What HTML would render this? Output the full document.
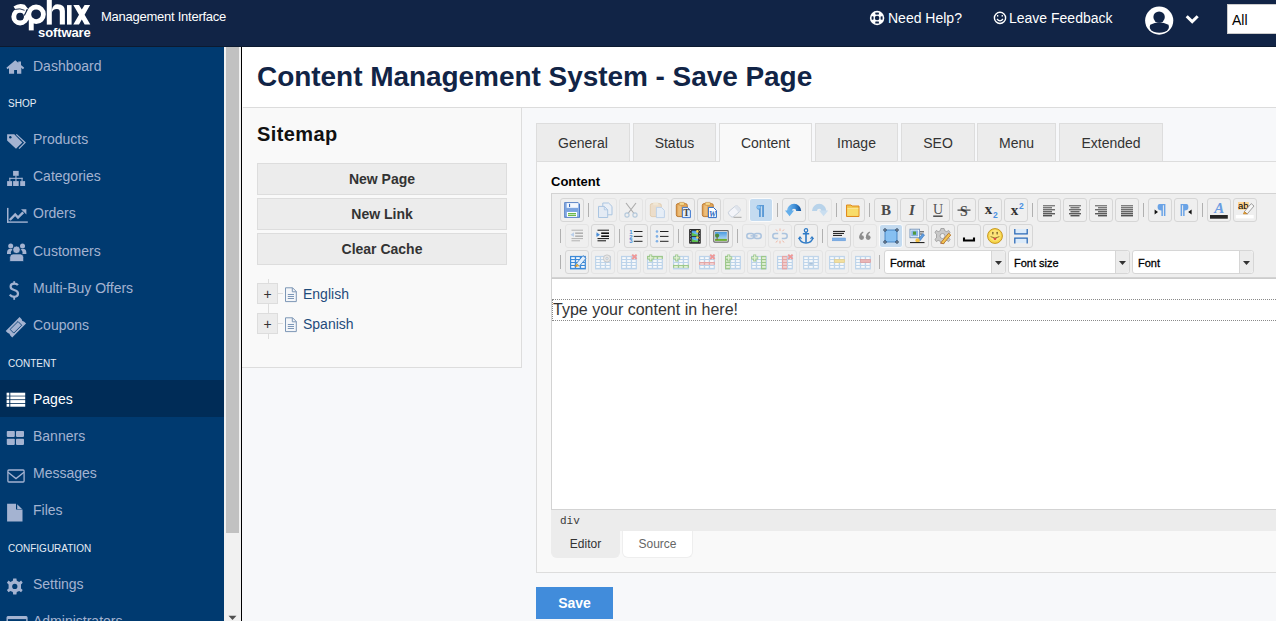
<!DOCTYPE html>
<html><head><meta charset="utf-8">
<style>
*{box-sizing:border-box}
html,body{margin:0;padding:0}
body{width:1276px;height:621px;overflow:hidden;position:relative;background:#f7f8fa;font-family:"Liberation Sans",sans-serif;}
.a{position:absolute}
#hdr{left:0;top:0;width:1276px;height:47px;background:#112446;border-bottom:1px solid #0c1a30}
#hdr .mi{left:101px;top:9px;color:#fff;font-size:13px;letter-spacing:-0.25px}
#hdr .lnk{color:#fff;font-size:14px;top:10px}
#side{left:0;top:47px;width:224px;height:574px;background:#003a70;overflow:hidden}
.it{position:absolute;left:0;width:224px;height:37px;color:#a4b3d1;font-size:14px}
.it span{position:absolute;left:33px;top:9px;line-height:20px}
.it svg{position:absolute;left:6px;top:9px}
.it.act{background:#002c57;color:#fff}
.sec{position:absolute;left:8px;color:#e6ecf5;font-size:10px}
#sb{left:224px;top:47px;width:17px;height:574px;background:#f1f1f1}
#sb .th{position:absolute;left:2px;top:0;width:13px;height:486px;background:#c1c1c1}
#vline{left:241px;top:47px;width:1px;height:574px;background:#000}
#titlebar{left:242px;top:47px;width:1034px;height:60px;background:#fff}
#titlebar h1{position:absolute;left:15px;top:14px;margin:0;font-size:28px;font-weight:bold;color:#112446;line-height:32px;letter-spacing:-0.05px}
#hline{left:243px;top:107px;width:1033px;height:1px;background:#dcdcdc}
#smap{left:242px;top:108px;width:280px;height:260px;background:#f9f9f9;border-right:1px solid #ddd;border-bottom:1px solid #ddd}
#smap h2{position:absolute;left:15px;top:14px;margin:0;letter-spacing:0.4px;font-size:20px;font-weight:bold;color:#111;line-height:24px}
.sbtn{position:absolute;left:15px;width:250px;height:32px;background:#ececec;border:1px solid #ddd;text-align:center;font-weight:bold;font-size:14px;color:#333;line-height:30px}
.tabs{position:absolute;top:123px;height:38px}
.tab{position:absolute;top:123px;height:38px;background:#ececec;border:1px solid #ddd;border-bottom:none;text-align:center;font-size:14px;color:#333;line-height:38px}
.tab.act{background:#f9f9f9;height:39px;z-index:2}
.plus{left:15px;width:21px;height:21px;background:#ececec;border:1px solid #ddd;text-align:center;font-size:14px;line-height:21px;color:#333}
.tnode{left:61px;font-size:14px;color:#1f4b7b;line-height:16px}
#panel{left:536px;top:161px;width:760px;height:412px;background:#f9f9f9;border:1px solid #ddd}
#panel .lbl{position:absolute;left:14px;top:12px;font-weight:bold;font-size:13px;color:#000}
#tbox{left:551px;top:193px;width:740px;height:85px;background:#efefef;border:1px solid #d3d3d3}
.tb{position:absolute;width:24px;height:24px;border:1px solid #d6d6d6;border-radius:3px;padding:3px 0 0 3px}
.tb svg{display:block}
.tb.act{background:#c4dbf0;border-color:#fbfbfb}
.tb.dis{border-color:#e4e4e4}
.tsep{position:absolute;width:1px;height:14px;background:#b0b0b0}
.combo{position:absolute;width:122px;height:24px;background:#fff;border:1px solid #d6d6d6;border-radius:3px;font-family:"Liberation Sans",sans-serif;font-size:11px;color:#000}
.combo span{position:absolute;left:5px;top:6px;line-height:12px;-webkit-text-stroke:0.3px #000}
.carr{position:absolute;right:0;top:0;width:14px;height:22px;background:#ececec;border-left:1px solid #d6d6d6;border-radius:0 3px 3px 0}
.carr svg{position:absolute;left:3px;top:10px}
#edarea{left:551px;top:278px;width:740px;height:232px;background:#fff;border-top:1px solid #cccccc;border-left:1px solid #d3d3d3;border-bottom:1px solid #d3d3d3}
#ediv{left:0;top:20px;width:740px;height:22px;border:1px dotted #8a8a8a;border-right:none;font-size:16px;color:#333;line-height:20px;padding-left:0}
#pathbar{left:551px;top:510px;width:740px;height:21px;background:#ececec;font-family:"Liberation Mono",monospace;font-size:11px;color:#3a3a3a;padding:5px 0 0 9px;line-height:12px}
.etab{top:531px;height:27px;border:1px solid #eee;border-top:none;border-radius:0 0 6px 6px;font-size:12px;color:#333;text-align:center;line-height:26px}
#save{left:536px;top:587px;width:77px;height:32px;background:#418cdb;color:#fff;font-weight:bold;font-size:14px;text-align:center;line-height:32px}
</style></head><body>

<div id="hdr" class="a">
  <div class="a mi">Management Interface</div>
  <div class="a lnk" style="left:888px">Need Help?</div>
  <div class="a lnk" style="left:1009px">Leave Feedback</div>
<svg class="a" style="left:0;top:0" width="1276" height="47" viewBox="0 0 1276 47">
  <g fill="#fff">
    <!-- logo a loop -->
    <circle cx="20.1" cy="16.65" r="6.3" fill="none" stroke="#fff" stroke-width="4.9"/>
    <path d="M13.5,6.4 Q19,2.4 24.8,4.8 L28.2,9 L24.6,10.6 Q20,7.6 15.4,9.6 Z"/>
    <!-- p -->
    <circle cx="36.1" cy="14.3" r="7.3" fill="none" stroke="#fff" stroke-width="4.8"/>
    <rect x="28.8" y="18.6" width="4.9" height="11.8"/>
    <path d="M24.8,21.6 L29.6,10.6" stroke="#fff" stroke-width="4.4"/>
    <path d="M15.2,9.4 Q20,7.9 24.6,10.3" fill="none" stroke="#112446" stroke-width="0.9"/>
    <path d="M27.3,9.4 L24.3,15.6" stroke="#112446" stroke-width="1.1"/>
    <!-- h -->
    <rect x="46.8" y="0" width="5" height="24.6"/>
    <path d="M51.8,10 Q53,4.3 57.5,4.3 Q64.9,4.3 64.9,11 L64.9,24.6 L59.8,24.6 L59.8,12 Q59.8,9 57,9 Q52.5,9 51.8,13 Z"/>
    <!-- i -->
    <rect x="67" y="5.1" width="4.6" height="19.5"/>
    <!-- x -->
    <path d="M73.3,5.1 L79,5.1 L81.8,9.6 L84.6,5.1 L90.1,5.1 L84.6,14.8 L90.3,24.6 L84.6,24.6 L81.8,19.6 L79,24.6 L73.3,24.6 L79,14.8 Z"/>
  </g>
  <text x="38" y="36.6" fill="#fff" font-family="Liberation Sans" font-weight="bold" font-size="13" letter-spacing="-0.1">software</text>
  <!-- life ring -->
  <circle cx="877.1" cy="18" r="7.2" fill="#fff"/>
  <path d="M881.37,16.28 A4.6,4.6 0 0 1 881.37,19.72 M878.82,22.27 A4.6,4.6 0 0 1 875.38,22.27 M872.83,19.72 A4.6,4.6 0 0 1 872.83,16.28 M875.38,13.73 A4.6,4.6 0 0 1 878.82,13.73 " fill="none" stroke="#112446" stroke-width="2"/>
  <circle cx="877.1" cy="18" r="2.3" fill="#112446"/>
  <!-- smiley -->
  <circle cx="1000" cy="17.9" r="5.6" fill="none" stroke="#fff" stroke-width="1.4"/>
  <rect x="997" y="15" width="1.3" height="1.6" fill="#fff"/><rect x="1001.6" y="15" width="1.3" height="1.6" fill="#fff"/>
  <path d="M997,19 Q1000,22.6 1003,19" fill="none" stroke="#fff" stroke-width="1.3"/>
  <!-- user -->
  <circle cx="1159.2" cy="20.6" r="14.1" fill="#fff"/>
  <circle cx="1159.1" cy="17.1" r="5.7" fill="#112446"/>
  <path d="M1150.2,24.8 Q1159.3,19.6 1168.5,24.8 Q1170.2,29.5 1165,31.8 Q1159.3,33.8 1153.6,31.8 Q1148.4,29.5 1150.2,24.8 Z" fill="#112446"/>
  <!-- chevron -->
  <path d="M1186.7,16.2 L1192.2,21.6 L1197.7,16.2" fill="none" stroke="#fff" stroke-width="3"/>
</svg>
<div class="a" style="left:1227px;top:4px;width:60px;height:30px;background:#fff;border:1px solid #ccc;border-right:none"></div>
<div class="a" style="left:1232px;top:12px;font-size:14px;color:#000">All</div>
</div>

<div id="side" class="a">
  <div class="it" style="top:0px"><span>Dashboard</span></div>
  <div class="sec" style="top:51px">SHOP</div>
  <div class="it" style="top:74px"><span style="top:8px">Products</span></div>
  <div class="it" style="top:111px"><span style="top:8px">Categories</span></div>
  <div class="it" style="top:148px"><span style="top:8px">Orders</span></div>
  <div class="it" style="top:185px"><span>Customers</span></div>
  <div class="it" style="top:222px"><span>Multi-Buy Offers</span></div>
  <div class="it" style="top:259px"><span>Coupons</span></div>
  <div class="sec" style="top:311px">CONTENT</div>
  <div class="it act" style="top:333px"><span>Pages</span></div>
  <div class="it" style="top:370px"><span>Banners</span></div>
  <div class="it" style="top:407px"><span>Messages</span></div>
  <div class="it" style="top:444px"><span>Files</span></div>
  <div class="sec" style="top:496px">CONFIGURATION</div>
  <div class="it" style="top:518px"><span>Settings</span></div>
  <div class="it" style="top:555px"><span>Administrators</span></div>
<svg class="a" style="left:0;top:0" width="224" height="574" viewBox="0 47 224 574">
 <g fill="#a4b3d1">
  <!-- home -->
  <path d="M7,68.6 L15.3,61.6 L23.6,68.6" fill="none" stroke="#a4b3d1" stroke-width="1.9"/>
  <rect x="18.2" y="61.5" width="2.8" height="4.5"/>
  <path d="M9,66.8 L15.3,61.9 L21.3,66.8 L21.3,73.8 L17,73.8 L17,70 L14.1,70 L14.1,73.8 L9,73.8 Z"/>
  <!-- tags -->
  <path d="M7.1,134.2 L14.3,134.2 L22.3,142.4 L16,148.7 L7.1,140.6 Z"/>
  <circle cx="10.3" cy="137.2" r="1.2" fill="#003a70"/>
  <path d="M16.3,134.4 L25,142.6 L19,148.6" fill="none" stroke="#a4b3d1" stroke-width="1.3"/>
  <!-- sitemap -->
  <rect x="13.1" y="170.9" width="5.6" height="4.9"/>
  <rect x="15.4" y="175.5" width="1.1" height="6"/>
  <rect x="9.3" y="177.8" width="13.3" height="1.1"/>
  <rect x="9.3" y="177.8" width="1.1" height="3.5"/><rect x="21.5" y="177.8" width="1.1" height="3.5"/>
  <rect x="7.1" y="181.1" width="5" height="4.9"/><rect x="13.1" y="181.1" width="5.6" height="4.9"/><rect x="20.2" y="181.1" width="4.9" height="4.9"/>
  <!-- chart -->
  <rect x="7" y="207.9" width="1.5" height="14.9"/>
  <rect x="7" y="221.4" width="20.8" height="1.4"/>
  <path d="M9.8,220 L15.2,214.4 L18,217.6 L23.2,212.4" fill="none" stroke="#a4b3d1" stroke-width="2.4"/>
  <path d="M21,209.2 L26.4,209.2 L26.4,214.6 Z"/>
  <!-- users -->
  <circle cx="10.7" cy="245.9" r="2.5"/><circle cx="22.5" cy="245.9" r="2.5"/>
  <path d="M7,254 Q6.8,249.6 9.2,249 L12.6,249 Q10.4,251.5 11,254 Z"/>
  <path d="M26.4,254 Q26.6,249.6 24.2,249 L20.8,249 Q23,251.5 22.4,254 Z"/>
  <circle cx="16.5" cy="249.8" r="3.8" stroke="#003a70" stroke-width="0.8"/>
  <path d="M9.7,261.6 L9.7,257.5 Q9.7,253.9 13,253.9 L20.4,253.9 Q23.7,253.9 23.7,257.5 L23.7,261.6 Z" stroke="#003a70" stroke-width="0.8"/>
  <!-- dollar -->
  <path d="M17.9,285.2 Q16.8,283.6 14.3,283.6 Q10.6,283.6 10.6,286.6 Q10.6,289.3 14.2,290 Q18,290.8 18,293.8 Q18,296.8 14.2,296.8 Q11.2,296.8 9.8,294.7" fill="none" stroke="#a4b3d1" stroke-width="2.2"/>
  <rect x="13.3" y="281.2" width="1.8" height="3"/><rect x="13.3" y="296" width="1.8" height="3.8"/>
  <!-- ticket -->
  <g transform="translate(15.9,327.3) rotate(-45)">
   <path d="M-9.8,-4.6 L9.8,-4.6 L9.8,-1.6 Q8.4,0 9.8,1.6 L9.8,4.6 L-9.8,4.6 L-9.8,1.6 Q-8.4,0 -9.8,-1.6 Z"/>
   <rect x="-5.6" y="-2.6" width="11.2" height="5.2" fill="none" stroke="#003a70" stroke-width="0.8"/>
  </g>
 </g>
 <g fill="#fff">
  <!-- list (active) -->
  <rect x="6.6" y="392.7" width="2.7" height="3"/><rect x="10.3" y="392.7" width="14.9" height="3"/>
  <rect x="6.6" y="396.4" width="2.7" height="2.9"/><rect x="10.3" y="396.4" width="14.9" height="2.9"/>
  <rect x="6.6" y="400.1" width="2.7" height="2.9"/><rect x="10.3" y="400.1" width="14.9" height="2.9"/>
  <rect x="6.6" y="403.8" width="2.7" height="2.9"/><rect x="10.3" y="403.8" width="14.9" height="2.9"/>
 </g>
 <g fill="#a4b3d1">
  <!-- banners grid -->
  <rect x="6.8" y="430.9" width="8" height="6" rx="0.8"/><rect x="16" y="430.9" width="8" height="6" rx="0.8"/>
  <rect x="6.8" y="438.7" width="8" height="6.2" rx="0.8"/><rect x="16" y="438.7" width="8" height="6.2" rx="0.8"/>
  <!-- envelope -->
  <rect x="7.9" y="470" width="16.2" height="12" rx="1" fill="none" stroke="#a4b3d1" stroke-width="1.3"/>
  <path d="M8,472.3 L16,478.6 L24,472.3" fill="none" stroke="#a4b3d1" stroke-width="1.3"/>
  <!-- file -->
  <path d="M7.1,503.7 L16,503.7 L16,509.6 L22.5,509.6 L22.5,521.6 L7.1,521.6 Z"/>
  <path d="M17.2,504.2 L22,509 L17.2,509 Z"/>
  <!-- gear -->
  <g transform="translate(14.8,586.4)">
   <path d="M-1.6,-8 L1.6,-8 L2,-5.6 L4.4,-4.5 L6.3,-5.9 L7.9,-3.7 L6.2,-2 L6.2,2 L7.9,3.7 L6.3,5.9 L4.4,4.5 L2,5.6 L1.6,8 L-1.6,8 L-2,5.6 L-4.4,4.5 L-6.3,5.9 L-7.9,3.7 L-6.2,2 L-6.2,-2 L-7.9,-3.7 L-6.3,-5.9 L-4.4,-4.5 L-2,-5.6 Z"/>
   <circle cx="0" cy="0" r="2.6" fill="#003a70"/>
  </g>
  <!-- id card -->
  <rect x="7.2" y="616.6" width="19.7" height="12" rx="1" fill="none" stroke="#a4b3d1" stroke-width="1.4"/>
  <rect x="7.2" y="616.6" width="19.7" height="2.5"/>
 </g>
</svg>
</div>
<div id="sb" class="a"><div class="th"></div><svg class="a" style="left:4px;top:568px" width="9" height="6" viewBox="0 0 9 6"><path d="M0.5,0.8 H8.5 L4.5,5 Z" fill="#505050"/></svg></div>
<div id="vline" class="a"></div>

<div id="titlebar" class="a"><h1>Content Management System - Save Page</h1></div>
<div id="hline" class="a"></div>

<div id="smap" class="a">
  <h2>Sitemap</h2>
  <div class="sbtn" style="top:55px">New Page</div>
  <div class="sbtn" style="top:90px">New Link</div>
  <div class="sbtn" style="top:125px">Clear Cache</div>
  <div class="a" style="left:26px;top:171px;width:1px;height:60px;background:#ddd"></div>
  <div class="a" style="left:36px;top:185px;width:5px;height:1px;background:#ddd"></div>
  <div class="a" style="left:36px;top:215px;width:5px;height:1px;background:#ddd"></div>
  <div class="a plus" style="top:175px">+</div>
  <div class="a plus" style="top:205px">+</div>
  <svg class="a" style="left:42px;top:179px" width="14" height="16" viewBox="0 0 14 16"><path d="M1.5,0.8 L8.6,0.8 L12.3,4.5 L12.3,14.6 L1.5,14.6 Z" fill="#f4f6f9" stroke="#7d97b6" stroke-width="1"/><path d="M8.3,0.8 L8.3,4.8 L12.3,4.8" fill="none" stroke="#7d97b6" stroke-width="1"/><path d="M3.8,7.5 H10 M3.8,9.5 H10 M3.8,11.5 H10" stroke="#6f8cb0" stroke-width="0.9"/></svg>
  <svg class="a" style="left:42px;top:209px" width="14" height="16" viewBox="0 0 14 16"><path d="M1.5,0.8 L8.6,0.8 L12.3,4.5 L12.3,14.6 L1.5,14.6 Z" fill="#f4f6f9" stroke="#7d97b6" stroke-width="1"/><path d="M8.3,0.8 L8.3,4.8 L12.3,4.8" fill="none" stroke="#7d97b6" stroke-width="1"/><path d="M3.8,7.5 H10 M3.8,9.5 H10 M3.8,11.5 H10" stroke="#6f8cb0" stroke-width="0.9"/></svg>
  <div class="a tnode" style="top:178px">English</div>
  <div class="a tnode" style="top:208px">Spanish</div>
</div>

<div id="panel" class="a">
  <div class="lbl">Content</div>
</div>
<div class="tab" style="left:536px;width:94px">General</div>
<div class="tab" style="left:633px;width:83px">Status</div>
<div class="tab act" style="left:719px;width:93px">Content</div>
<div class="tab" style="left:815px;width:83px">Image</div>
<div class="tab" style="left:901px;width:74px">SEO</div>
<div class="tab" style="left:977px;width:79px">Menu</div>
<div class="tab" style="left:1059px;width:104px">Extended</div>

<!--ED-->
<div class="a" id="tbox"></div>
<div class="tb" style="left:560px;top:198px"><svg width="16" height="16" viewBox="0 0 16 16" overflow="visible"><g><path d="M0.3,0.2 H14 L15.9,2.1 V15.7 H0.3 Z" fill="#3a6cbd"/>
<rect x="1.2" y="1" width="13.8" height="13.8" fill="#8fb3e8"/>
<rect x="2.8" y="1.1" width="11.3" height="4.7" fill="#f3f7fd"/>
<rect x="5" y="1.9" width="1.1" height="3.1" fill="#3a6cbd"/>
<rect x="2" y="6.1" width="12" height="3.6" fill="#7aa3df"/>
<rect x="3" y="10" width="10" height="4.9" fill="#fff"/>
<rect x="4" y="11" width="8" height="1.25" fill="#6cb84a"/><rect x="4" y="12.8" width="8" height="1.25" fill="#6cb84a"/></g></svg></div>
<div class="tsep" style="left:588px;top:203px"></div>
<div class="tb dis" style="left:593px;top:198px"><svg width="16" height="16" viewBox="0 0 16 16" overflow="visible"><g opacity="0.85"><path d="M5.8,1 H11.6 L15,4.4 V12.8 H5.8 Z" fill="#eaf0f8" stroke="#9fbedf" stroke-width="1"/>
<path d="M1.5,4.4 H7.3 L10.7,7.8 V15.5 H1.5 Z" fill="#e3ebf6" stroke="#9fbedf" stroke-width="1"/>
<path d="M7.3,4.4 V7.8 H10.7" fill="none" stroke="#9fbedf" stroke-width="0.8"/></g></svg></div>
<div class="tb dis" style="left:619px;top:198px"><svg width="16" height="16" viewBox="0 0 16 16" overflow="visible"><g opacity="0.8"><path d="M3,1 L11,11.5 M13,1 L5,11.5" stroke="#9a9a9a" stroke-width="1.1"/>
<circle cx="4" cy="13" r="2.1" fill="none" stroke="#a6c0d8" stroke-width="1.1"/>
<circle cx="12" cy="13" r="2.1" fill="none" stroke="#a6c0d8" stroke-width="1.1"/></g></svg></div>
<div class="tb dis" style="left:645px;top:198px"><svg width="16" height="16" viewBox="0 0 16 16" overflow="visible"><g opacity="0.9"><rect x="1.3" y="1.6" width="11" height="13" rx="1.8" fill="#ecdcc6" stroke="#dfc7a6" stroke-width="0.9"/>
<rect x="4.2" y="0.4" width="5.2" height="2.9" fill="#f1e6d2"/>
<path d="M7.4,5.4 H12.4 L15.4,8.4 V15.6 H7.4 Z" fill="#e6eef8" stroke="#b9cfe9" stroke-width="1"/></g></svg></div>
<div class="tb" style="left:671px;top:198px"><svg width="16" height="16" viewBox="0 0 16 16" overflow="visible"><g><rect x="1.3" y="1.6" width="11" height="13" rx="1.8" fill="#e3a659" stroke="#b8742a" stroke-width="0.9"/>
<rect x="3.2" y="3.2" width="3" height="10.5" fill="#f0c98a" opacity="0.7"/>
<rect x="4.2" y="0.4" width="5.2" height="2.9" rx="0.6" fill="#f6d98c" stroke="#c2873a" stroke-width="0.6"/><path d="M7.4,5.4 H12.4 L15.4,8.4 V15.6 H7.4 Z" fill="#e4eefb" stroke="#3f78cf" stroke-width="1"/>
<text x="11.4" y="14.4" text-anchor="middle" font-family="Liberation Serif" font-weight="bold" font-size="9.5" fill="#444">T</text></g></svg></div>
<div class="tb" style="left:697px;top:198px"><svg width="16" height="16" viewBox="0 0 16 16" overflow="visible"><g><rect x="1.3" y="1.6" width="11" height="13" rx="1.8" fill="#e3a659" stroke="#b8742a" stroke-width="0.9"/>
<rect x="3.2" y="3.2" width="3" height="10.5" fill="#f0c98a" opacity="0.7"/>
<rect x="4.2" y="0.4" width="5.2" height="2.9" rx="0.6" fill="#f6d98c" stroke="#c2873a" stroke-width="0.6"/><path d="M7.4,5.4 H12.4 L15.4,8.4 V15.6 H7.4 Z" fill="#fff" stroke="#2d6bc4" stroke-width="1"/>
<text x="11.6" y="14.6" text-anchor="middle" font-family="Liberation Serif" font-weight="bold" font-style="italic" font-size="8" fill="#2a66c0">W</text></g></svg></div>
<div class="tb dis" style="left:723px;top:198px"><svg width="16" height="16" viewBox="0 0 16 16" overflow="visible"><g opacity="0.85"><g transform="translate(7.4,9.4) rotate(-40)"><rect x="-6" y="-3.5" width="12" height="7" rx="2.2" fill="#f4f6fb" stroke="#b9c3d3" stroke-width="0.8"/><rect x="2.5" y="-3.2" width="3.2" height="6.4" fill="#dde3ec"/></g>
<path d="M6.5,15.3 H14.5" stroke="#999" stroke-width="1"/></g></svg></div>
<div class="tb act" style="left:749px;top:198px"><svg width="16" height="16" viewBox="0 0 16 16" overflow="visible"><g><path d="M5.8,3 H11 V15 H9.1 V4.3 H7.8 V15 H6 V7.7 H5.8 A2.35,2.35 0 0 1 5.8,3 Z" fill="#5b9ad6"/><circle cx="5.6" cy="5.2" r="1.6" fill="#86c2f4"/></g></svg></div>
<div class="tsep" style="left:777px;top:203px"></div>
<div class="tb" style="left:782px;top:198px"><svg width="16" height="16" viewBox="0 0 16 16" overflow="visible"><g><defs><linearGradient id="ug" x1="0" y1="0" x2="1" y2="0"><stop offset="0" stop-color="#7bbcf0"/><stop offset="0.55" stop-color="#3f8fd8"/><stop offset="1" stop-color="#0e4f98"/></linearGradient></defs>
<path d="M0.9,9 A7.15,7.15 0 0 1 15.2,9 L10.2,9 A2.15,2.15 0 0 0 5.9,9 Z" fill="url(#ug)"/>
<path d="M-1,8.5 L8.1,8.5 L3.6,14.2 Z" fill="#64aeea"/></g></svg></div>
<div class="tb dis" style="left:808px;top:198px"><svg width="16" height="16" viewBox="0 0 16 16" overflow="visible"><g><path d="M14.3,9 A7.15,7.15 0 0 0 0,9 L5,9 A2.15,2.15 0 0 1 9.3,9 Z" fill="#b8d3ea"/>
<path d="M16.2,8.5 L7.1,8.5 L11.6,14.2 Z" fill="#c9def0"/></g></svg></div>
<div class="tsep" style="left:836px;top:203px"></div>
<div class="tb" style="left:841px;top:198px"><svg width="16" height="16" viewBox="0 0 16 16" overflow="visible"><g><path d="M1.5,3 H6 L7,4 H14 V14.5 H1.5 Z" fill="#f3c64a" stroke="#e08a1e" stroke-width="1"/>
<rect x="2.3" y="7" width="11" height="6.8" fill="#f8dc6a"/><path d="M2.3,6.4 H13.5" stroke="#fbeeb0" stroke-width="0.8"/></g></svg></div>
<div class="tsep" style="left:869px;top:203px"></div>
<div class="tb" style="left:874px;top:198px"><svg width="16" height="16" viewBox="0 0 16 16" overflow="visible"><g><text x="8" y="13.2" text-anchor="middle" font-family="Liberation Serif" font-size="15" font-weight="bold" font-style="normal" fill="#4a4a4a">B</text></g></svg></div>
<div class="tb" style="left:900px;top:198px"><svg width="16" height="16" viewBox="0 0 16 16" overflow="visible"><g><text x="8" y="13.2" text-anchor="middle" font-family="Liberation Serif" font-size="15" font-weight="bold" font-style="italic" fill="#4a4a4a">I</text></g></svg></div>
<div class="tb" style="left:926px;top:198px"><svg width="16" height="16" viewBox="0 0 16 16" overflow="visible"><g><text x="8" y="12.3" text-anchor="middle" font-family="Liberation Serif" font-size="14" font-weight="normal" font-style="normal" fill="#555">U</text><rect x="3.2" y="13.6" width="9.4" height="1.1" fill="#111"/></g></svg></div>
<div class="tb" style="left:952px;top:198px"><svg width="16" height="16" viewBox="0 0 16 16" overflow="visible"><g><text x="8" y="13.5" text-anchor="middle" font-family="Liberation Serif" font-size="14" font-weight="bold" font-style="normal" fill="#555">S</text><path d="M1.5,8.1 H14.5" stroke="#222" stroke-width="1"/></g></svg></div>
<div class="tb" style="left:978px;top:198px"><svg width="16" height="16" viewBox="0 0 16 16" overflow="visible"><g><text x="6.5" y="11.5" text-anchor="middle" font-family="Liberation Serif" font-size="15" font-weight="bold" font-style="normal" fill="#333">x</text><text x="11" y="15.6" font-family="Liberation Sans" font-weight="bold" font-size="8.5" fill="#4a90e2">2</text></g></svg></div>
<div class="tb" style="left:1004px;top:198px"><svg width="16" height="16" viewBox="0 0 16 16" overflow="visible"><g><text x="6.5" y="13" text-anchor="middle" font-family="Liberation Serif" font-size="15" font-weight="bold" font-style="normal" fill="#333">x</text><text x="11" y="6.8" font-family="Liberation Sans" font-weight="bold" font-size="8.5" fill="#4a90e2">2</text></g></svg></div>
<div class="tsep" style="left:1032px;top:203px"></div>
<div class="tb" style="left:1037px;top:198px"><svg width="16" height="16" viewBox="0 0 16 16" overflow="visible"><g><path d="M2,3.8 H14" stroke="#111" stroke-width="1" opacity="0.7"/><path d="M2,5.8 H11" stroke="#111" stroke-width="1" opacity="0.76"/><path d="M2,7.8 H14" stroke="#111" stroke-width="1" opacity="0.82"/><path d="M2,9.8 H11" stroke="#111" stroke-width="1" opacity="0.8799999999999999"/><path d="M2,11.8 H14" stroke="#111" stroke-width="1" opacity="0.94"/><path d="M2,13.8 H11" stroke="#111" stroke-width="1" opacity="1.0"/></g></svg></div>
<div class="tb" style="left:1063px;top:198px"><svg width="16" height="16" viewBox="0 0 16 16" overflow="visible"><g><path d="M2,3.8 H14" stroke="#111" stroke-width="1" opacity="0.7"/><path d="M3.5,5.8 H12.5" stroke="#111" stroke-width="1" opacity="0.76"/><path d="M2,7.8 H14" stroke="#111" stroke-width="1" opacity="0.82"/><path d="M3.5,9.8 H12.5" stroke="#111" stroke-width="1" opacity="0.8799999999999999"/><path d="M2,11.8 H14" stroke="#111" stroke-width="1" opacity="0.94"/><path d="M3.5,13.8 H12.5" stroke="#111" stroke-width="1" opacity="1.0"/></g></svg></div>
<div class="tb" style="left:1089px;top:198px"><svg width="16" height="16" viewBox="0 0 16 16" overflow="visible"><g><path d="M2,3.8 H14" stroke="#111" stroke-width="1" opacity="0.7"/><path d="M5,5.8 H14" stroke="#111" stroke-width="1" opacity="0.76"/><path d="M2,7.8 H14" stroke="#111" stroke-width="1" opacity="0.82"/><path d="M5,9.8 H14" stroke="#111" stroke-width="1" opacity="0.8799999999999999"/><path d="M2,11.8 H14" stroke="#111" stroke-width="1" opacity="0.94"/><path d="M5,13.8 H14" stroke="#111" stroke-width="1" opacity="1.0"/></g></svg></div>
<div class="tb" style="left:1115px;top:198px"><svg width="16" height="16" viewBox="0 0 16 16" overflow="visible"><g><path d="M2,3.8 H14" stroke="#111" stroke-width="1" opacity="0.7"/><path d="M2,5.8 H14" stroke="#111" stroke-width="1" opacity="0.76"/><path d="M2,7.8 H14" stroke="#111" stroke-width="1" opacity="0.82"/><path d="M2,9.8 H14" stroke="#111" stroke-width="1" opacity="0.8799999999999999"/><path d="M2,11.8 H14" stroke="#111" stroke-width="1" opacity="0.94"/><path d="M2,13.8 H14" stroke="#111" stroke-width="1" opacity="1.0"/></g></svg></div>
<div class="tsep" style="left:1143px;top:203px"></div>
<div class="tb" style="left:1148px;top:198px"><svg width="16" height="16" viewBox="0 0 16 16" overflow="visible"><g><path d="M7.6,2 H13.4 V13.9 H11.9 V3.3 H10.9 V13.9 H9.4 V8.6 Q5.6,8.6 5.6,5.3 Q5.6,2 7.6,2 Z" fill="#6aa3e6"/>
<path d="M2.6,7.6 L6,10 L2.6,12.4 Z" fill="#111"/></g></svg></div>
<div class="tb" style="left:1174px;top:198px"><svg width="16" height="16" viewBox="0 0 16 16" overflow="visible"><g><path d="M2.6,2 H8.4 Q10.4,2 10.4,5.3 Q10.4,8.6 6.6,8.6 V13.9 H5.1 V3.3 H4.1 V13.9 H2.6 Z" fill="#6aa3e6"/>
<path d="M13.6,7.6 L10.2,10 L13.6,12.4 Z" fill="#111"/></g></svg></div>
<div class="tsep" style="left:1202px;top:203px"></div>
<div class="tb" style="left:1207px;top:198px"><svg width="16" height="16" viewBox="0 0 16 16" overflow="visible"><g><text x="8.3" y="10.8" text-anchor="middle" font-family="Liberation Serif" font-size="15" font-weight="bold" font-style="italic" fill="#6a9de2">A</text><rect x="-1" y="13" width="17.8" height="3.7" fill="#262626"/></g></svg></div>
<div class="tb" style="left:1233px;top:198px"><svg width="16" height="16" viewBox="0 0 16 16" overflow="visible"><g><rect x="1" y="0" width="10.8" height="7.8" fill="#fdd592"/>
<text x="1" y="7" font-family="Liberation Sans" font-size="9.5" fill="#000">ab</text>
<path d="M7.4,9.6 L14.2,1.6 L17,4 L10.2,12 Z" fill="#f6f6f6" stroke="#8a8a8a" stroke-width="0.8"/>
<path d="M7.4,9.6 L6.3,12 L10.2,12 Z" fill="#e7a33a" stroke="#b57421" stroke-width="0.5"/>
<rect x="-1.2" y="13" width="17.9" height="3.4" fill="#fff"/></g></svg></div>
<div class="tsep" style="left:560px;top:229px"></div>
<div class="tb dis" style="left:565px;top:224px"><svg width="16" height="16" viewBox="0 0 16 16" overflow="visible"><g opacity="0.75"><path d="M2.5,2.2 H14" stroke="#9d9d9d" stroke-width="1"/>
<rect x="6.2" y="4.4" width="7.8" height="1.6" fill="#9d9d9d"/><rect x="6.2" y="7.4" width="7.8" height="1.6" fill="#9d9d9d"/>
<path d="M2.5,10.6 H14 M2.5,12.8 H11" stroke="#9d9d9d" stroke-width="1"/><path d="M5,4.3 L1.5,6.7 L5,9.1 Z" fill="#a9c6ea"/><path d="M2.5,6.7 H5" stroke="#a9c6ea" stroke-width="1"/></g></svg></div>
<div class="tb" style="left:591px;top:224px"><svg width="16" height="16" viewBox="0 0 16 16" overflow="visible"><g><path d="M2.5,2.2 H14" stroke="#111" stroke-width="1"/>
<rect x="6.2" y="4.4" width="7.8" height="1.6" fill="#111"/><rect x="6.2" y="7.4" width="7.8" height="1.6" fill="#111"/>
<path d="M2.5,10.6 H14 M2.5,12.8 H11" stroke="#111" stroke-width="1"/><path d="M1.5,4.3 L5,6.7 L1.5,9.1 Z" fill="#4a8ed8"/><path d="M1.5,6.7 H4" stroke="#4a8ed8" stroke-width="1"/></g></svg></div>
<div class="tsep" style="left:619px;top:229px"></div>
<div class="tb" style="left:624px;top:224px"><svg width="16" height="16" viewBox="0 0 16 16" overflow="visible"><g><text x="1.2" y="5.6" font-family="Liberation Sans" font-weight="bold" font-size="6" fill="#4a8ed8">1</text>
<text x="1.2" y="10.5" font-family="Liberation Sans" font-weight="bold" font-size="6" fill="#4a8ed8">2</text>
<text x="1.2" y="15.4" font-family="Liberation Sans" font-weight="bold" font-size="6" fill="#4a8ed8">3</text>
<path d="M5.8,3.5 H14.5 M5.8,8.4 H14.5 M5.8,13.3 H14.5" stroke="#222" stroke-width="1"/></g></svg></div>
<div class="tb" style="left:650px;top:224px"><svg width="16" height="16" viewBox="0 0 16 16" overflow="visible"><g><circle cx="3" cy="3.5" r="1.3" fill="#7fb0e6"/><circle cx="3" cy="8.4" r="1.3" fill="#7fb0e6"/><circle cx="3" cy="13.3" r="1.3" fill="#7fb0e6"/>
<path d="M6,3.5 H14.5 M6,8.4 H14.5 M6,13.3 H14.5" stroke="#222" stroke-width="1"/></g></svg></div>
<div class="tsep" style="left:678px;top:229px"></div>
<div class="tb" style="left:683px;top:224px"><svg width="16" height="16" viewBox="0 0 16 16" overflow="visible"><g><defs><linearGradient id="sky1" x1="0" y1="0" x2="0" y2="1"><stop offset="0" stop-color="#3d98e6"/><stop offset="1" stop-color="#9fd4f5"/></linearGradient></defs>
<rect x="2.1" y="0.9" width="11.7" height="14.9" rx="0.8" fill="#2b2b2b"/>
<rect x="4.8" y="2.7" width="6.3" height="5.3" fill="url(#sky1)"/><path d="M4.8,4.6 Q8,7 11.1,6.2 V8 H4.8 Z" fill="#5cc04a"/><circle cx="10.4" cy="3.4" r="1.3" fill="#f3d548"/>
<rect x="4.8" y="8.8" width="6.3" height="5.3" fill="url(#sky1)"/><path d="M4.8,10.7 Q8,13.1 11.1,12.3 V14.1 H4.8 Z" fill="#5cc04a"/><circle cx="10.4" cy="9.5" r="1.3" fill="#f3d548"/>
<g fill="#9a9a9a"><rect x="3" y="2" width="1" height="1"/><rect x="3" y="4.8" width="1" height="1"/><rect x="3" y="7.6" width="1" height="1"/><rect x="3" y="10.4" width="1" height="1"/><rect x="3" y="13.2" width="1" height="1"/>
<rect x="12" y="2" width="1" height="1"/><rect x="12" y="4.8" width="1" height="1"/><rect x="12" y="7.6" width="1" height="1"/><rect x="12" y="10.4" width="1" height="1"/><rect x="12" y="13.2" width="1" height="1"/></g></g></svg></div>
<div class="tb" style="left:709px;top:224px"><svg width="16" height="16" viewBox="0 0 16 16" overflow="visible"><g><defs><linearGradient id="sky2" x1="0" y1="0" x2="0" y2="1"><stop offset="0" stop-color="#4a9be0"/><stop offset="1" stop-color="#c4e3f8"/></linearGradient></defs>
<rect x="0.8" y="2.7" width="14.4" height="11.4" rx="0.8" fill="#fff" stroke="#666" stroke-width="1.2"/>
<rect x="2" y="3.9" width="11.9" height="9" fill="url(#sky2)"/><rect x="2" y="10.9" width="11.9" height="2" fill="#6fae2e"/>
<rect x="3.6" y="8.6" width="1" height="3.4" fill="#8a5a3a"/><circle cx="4.1" cy="7.6" r="2.1" fill="#4e8a3c"/></g></svg></div>
<div class="tsep" style="left:737px;top:229px"></div>
<div class="tb dis" style="left:742px;top:224px"><svg width="16" height="16" viewBox="0 0 16 16" overflow="visible"><g opacity="0.9"><rect x="0.8" y="5.4" width="7.2" height="5" rx="2.5" fill="none" stroke="#a4bfdd" stroke-width="1.5"/>
<rect x="8" y="5.4" width="7.2" height="5" rx="2.5" fill="none" stroke="#a4bfdd" stroke-width="1.5"/><path d="M4.5,7.9 H11.5" stroke="#a4bfdd" stroke-width="1.4"/></g></svg></div>
<div class="tb dis" style="left:768px;top:224px"><svg width="16" height="16" viewBox="0 0 16 16" overflow="visible"><g opacity="0.9"><path d="M6.2,5.4 H3.3 Q0.8,5.4 0.8,7.9 Q0.8,10.4 3.3,10.4 H6.2 M9.8,5.4 H12.7 Q15.2,5.4 15.2,7.9 Q15.2,10.4 12.7,10.4 H9.8" fill="none" stroke="#a4bfdd" stroke-width="1.5"/>
<path d="M8,0.5 V3 M8,12.8 V15.5 M4,1.5 L5.5,3.2 M12,1.5 L10.5,3.2 M4,14.5 L5.5,12.6 M12,14.5 L10.5,12.6" stroke="#f0a890" stroke-width="0.9"/></g></svg></div>
<div class="tb" style="left:794px;top:224px"><svg width="16" height="16" viewBox="0 0 16 16" overflow="visible"><g><circle cx="8" cy="2.4" r="1.7" fill="none" stroke="#2f7bc6" stroke-width="1.2"/>
<path d="M8,4 V14.5 M4.8,5.8 H11.2" stroke="#2f7bc6" stroke-width="1.6"/>
<path d="M1.2,9.8 Q2.2,14.8 8,15 Q13.8,14.8 14.8,9.8" fill="none" stroke="#2f7bc6" stroke-width="1.5"/>
<path d="M0.5,10.8 L2,8.8 L3.5,10.8 M12.5,10.8 L14,8.8 L15.5,10.8" fill="none" stroke="#2f7bc6" stroke-width="1.1"/></g></svg></div>
<div class="tsep" style="left:822px;top:229px"></div>
<div class="tb" style="left:827px;top:224px"><svg width="16" height="16" viewBox="0 0 16 16" overflow="visible"><g><path d="M2,3.4 H14 M2,5.4 H13 M2,7.4 H11" stroke="#111" stroke-width="1"/>
<rect x="1.5" y="10" width="13" height="2.8" fill="#7fb0e6" stroke="#5e98da" stroke-width="0.5"/></g></svg></div>
<div class="tb dis" style="left:853px;top:224px"><svg width="16" height="16" viewBox="0 0 16 16" overflow="visible"><g><g fill="#8d8d8d"><circle cx="4.6" cy="9.6" r="2.4"/><path d="M2.3,9.4 Q2.3,5.2 6,3.6 L6.5,4.6 Q4.4,6 4.6,8 Z"/>
<circle cx="11.2" cy="9.6" r="2.4"/><path d="M8.9,9.4 Q8.9,5.2 12.6,3.6 L13.1,4.6 Q11,6 11.2,8 Z"/></g></g></svg></div>
<div class="tb act" style="left:879px;top:224px"><svg width="16" height="16" viewBox="0 0 16 16" overflow="visible"><g><rect x="2" y="2" width="12" height="12" fill="#86c0f2" stroke="#3677b8" stroke-width="0.8"/>
<g fill="#fff" stroke="#0f2a4a" stroke-width="1"><circle cx="2" cy="2" r="1.2"/><circle cx="14" cy="2" r="1.2"/><circle cx="2" cy="14" r="1.2"/><circle cx="14" cy="14" r="1.2"/></g></g></svg></div>
<div class="tb" style="left:905px;top:224px"><svg width="16" height="16" viewBox="0 0 16 16" overflow="visible"><g><rect x="1" y="1.2" width="9.5" height="8.5" fill="#fff" stroke="#6c8fb8" stroke-width="0.9"/>
<rect x="2.2" y="2.4" width="7" height="6" fill="#88b6e4"/><rect x="4" y="3.5" width="3" height="3.2" fill="#4f9a3c"/>
<path d="M11,3.8 H15 M11,6 H13.5" stroke="#333" stroke-width="0.9"/>
<path d="M9,11.5 L13.8,5.5 L15.5,7 L10.8,13 Z" fill="#5f9ee0" stroke="#2d6bb8" stroke-width="0.6"/>
<circle cx="8.6" cy="12.4" r="2.2" fill="#f3c24a"/><path d="M1,14.6 H15.5" stroke="#111" stroke-width="1"/></g></svg></div>
<div class="tb" style="left:931px;top:224px"><svg width="16" height="16" viewBox="0 0 16 16" overflow="visible"><g><g transform="translate(7.5,8)"><path d="M-1.6,-7.5 L1.6,-7.5 L2.1,-5.4 L4.3,-4.3 L6.1,-5.6 L7.6,-3.4 L6,-1.8 L6,1.8 L7.6,3.4 L6.1,5.6 L4.3,4.3 L2.1,5.4 L1.6,7.5 L-1.6,7.5 L-2.1,5.4 L-4.3,4.3 L-6.1,5.6 L-7.6,3.4 L-6,1.8 L-6,-1.8 L-7.6,-3.4 L-6.1,-5.6 L-4.3,-4.3 L-2.1,-5.4 Z" fill="#c9c9c9" stroke="#8e8e8e" stroke-width="0.7"/><circle r="2.5" fill="#efefef" stroke="#8e8e8e" stroke-width="0.7"/></g>
<path d="M6,14.5 L13.6,5.2 L15.8,7 L8.2,16 Z" fill="#f2c452" stroke="#b06b22" stroke-width="0.8"/><path d="M6,14.5 L5.3,16 L7.2,15.6 Z" fill="#c06e4a"/></g></svg></div>
<div class="tb" style="left:957px;top:224px"><svg width="16" height="16" viewBox="0 0 16 16" overflow="visible"><g><path d="M3,9.6 V12.5 H13 V9.6" fill="none" stroke="#000" stroke-width="2.1"/></g></svg></div>
<div class="tb" style="left:983px;top:224px"><svg width="16" height="16" viewBox="0 0 16 16" overflow="visible"><g><circle cx="8" cy="8" r="7.4" fill="#f7d84e" stroke="#c8961e" stroke-width="1"/>
<circle cx="8" cy="7.4" r="5.6" fill="#fde98a" opacity="0.7"/>
<rect x="5.3" y="3.8" width="1.1" height="2.8" rx="0.55" fill="#6a5420"/><rect x="9.6" y="3.8" width="1.1" height="2.8" rx="0.55" fill="#6a5420"/>
<path d="M3.6,8.6 Q8,11.6 12.4,8.6" fill="none" stroke="#8a6a24" stroke-width="0.9"/>
<path d="M6.3,10 Q8,14.4 9.7,10 Z" fill="#e0454a"/></g></svg></div>
<div class="tb" style="left:1009px;top:224px"><svg width="16" height="16" viewBox="0 0 16 16" overflow="visible"><g><rect x="2.2" y="1" width="11.6" height="5.5" fill="#dcebfa"/><rect x="2.2" y="9.5" width="11.6" height="5.5" fill="#dcebfa"/>
<path d="M1.8,1 V5.8 H14.2 V1 M1.8,15.5 V10.2 H14.2 V15.5" fill="none" stroke="#2d6bb8" stroke-width="1.3"/></g></svg></div>
<div class="tsep" style="left:560px;top:255px"></div>
<div class="tb" style="left:565px;top:250px"><svg width="16" height="16" viewBox="0 0 16 16" overflow="visible"><g><rect x="1" y="1.9" width="15.9" height="13.5" fill="#3d8ad8"/><rect x="2.20" y="3.20" width="3.6" height="1.75" fill="#fff"/><rect x="7.15" y="3.20" width="3.6" height="1.75" fill="#fff"/><rect x="12.10" y="3.20" width="3.6" height="1.75" fill="#fff"/><rect x="2.20" y="6.15" width="3.6" height="1.75" fill="#fff"/><rect x="7.15" y="6.15" width="3.6" height="1.75" fill="#fff"/><rect x="12.10" y="6.15" width="3.6" height="1.75" fill="#fff"/><rect x="2.20" y="9.10" width="3.6" height="1.75" fill="#fff"/><rect x="7.15" y="9.10" width="3.6" height="1.75" fill="#fff"/><rect x="12.10" y="9.10" width="3.6" height="1.75" fill="#fff"/><rect x="2.20" y="12.05" width="3.6" height="1.75" fill="#fff"/><rect x="7.15" y="12.05" width="3.6" height="1.75" fill="#fff"/><rect x="12.10" y="12.05" width="3.6" height="1.75" fill="#fff"/>
<path d="M7.4,9.4 L14,1.6 L17,4.4 L10.4,12.2 Z" fill="#e4f0fc" stroke="#3a7fc8" stroke-width="0.9"/>
<path d="M7.4,9.4 L6.2,12.8 L10.4,12.2 Z" fill="#f2b63c"/><path d="M5.2,12.4 Q7,10.6 8.6,12.3 Z" fill="#b86a1a"/></g></svg></div>
<div class="tb dis" style="left:591px;top:250px"><svg width="16" height="16" viewBox="0 0 16 16" overflow="visible"><g opacity="0.8"><rect x="0" y="1.9" width="15.9" height="13.5" fill="#b4cfea"/><rect x="1.20" y="3.20" width="3.6" height="1.75" fill="#fff"/><rect x="6.15" y="3.20" width="3.6" height="1.75" fill="#fff"/><rect x="11.10" y="3.20" width="3.6" height="1.75" fill="#fff"/><rect x="1.20" y="6.15" width="3.6" height="1.75" fill="#fff"/><rect x="6.15" y="6.15" width="3.6" height="1.75" fill="#fff"/><rect x="11.10" y="6.15" width="3.6" height="1.75" fill="#fff"/><rect x="1.20" y="9.10" width="3.6" height="1.75" fill="#fff"/><rect x="6.15" y="9.10" width="3.6" height="1.75" fill="#fff"/><rect x="11.10" y="9.10" width="3.6" height="1.75" fill="#fff"/><rect x="1.20" y="12.05" width="3.6" height="1.75" fill="#fff"/><rect x="6.15" y="12.05" width="3.6" height="1.75" fill="#fff"/><rect x="11.10" y="12.05" width="3.6" height="1.75" fill="#fff"/><g transform="translate(12,4.5)"><circle r="3.6" fill="#e6e6e6" stroke="#b5b5b5" stroke-width="0.8"/><circle r="1.3" fill="#cfe0f0" stroke="#b5b5b5" stroke-width="0.6"/></g></g></svg></div>
<div class="tb dis" style="left:617px;top:250px"><svg width="16" height="16" viewBox="0 0 16 16" overflow="visible"><g opacity="0.85"><rect x="0" y="1.9" width="15.9" height="13.5" fill="#b4cfea"/><rect x="1.20" y="3.20" width="3.6" height="1.75" fill="#fff"/><rect x="6.15" y="3.20" width="3.6" height="1.75" fill="#fff"/><rect x="11.10" y="3.20" width="3.6" height="1.75" fill="#fff"/><rect x="1.20" y="6.15" width="3.6" height="1.75" fill="#fff"/><rect x="6.15" y="6.15" width="3.6" height="1.75" fill="#fff"/><rect x="11.10" y="6.15" width="3.6" height="1.75" fill="#fff"/><rect x="1.20" y="9.10" width="3.6" height="1.75" fill="#fff"/><rect x="6.15" y="9.10" width="3.6" height="1.75" fill="#fff"/><rect x="11.10" y="9.10" width="3.6" height="1.75" fill="#fff"/><rect x="1.20" y="12.05" width="3.6" height="1.75" fill="#fff"/><rect x="6.15" y="12.05" width="3.6" height="1.75" fill="#fff"/><rect x="11.10" y="12.05" width="3.6" height="1.75" fill="#fff"/><path d="M11.2,0.6 L15.6,5 M15.6,0.6 L11.2,5" stroke="#ee8a8a" stroke-width="2"/></g></svg></div>
<div class="tb dis" style="left:643px;top:250px"><svg width="16" height="16" viewBox="0 0 16 16" overflow="visible"><g opacity="0.85"><rect x="0" y="1.9" width="15.9" height="13.5" fill="#b4cfea"/><rect x="0" y="1.90" width="15.9" height="3.05" fill="#8fc27a"/><rect x="1.20" y="3.20" width="3.6" height="1.75" fill="#e4f3d6"/><rect x="6.15" y="3.20" width="3.6" height="1.75" fill="#e4f3d6"/><rect x="11.10" y="3.20" width="3.6" height="1.75" fill="#e4f3d6"/><rect x="1.20" y="6.15" width="3.6" height="1.75" fill="#fff"/><rect x="6.15" y="6.15" width="3.6" height="1.75" fill="#fff"/><rect x="11.10" y="6.15" width="3.6" height="1.75" fill="#fff"/><rect x="1.20" y="9.10" width="3.6" height="1.75" fill="#fff"/><rect x="6.15" y="9.10" width="3.6" height="1.75" fill="#fff"/><rect x="11.10" y="9.10" width="3.6" height="1.75" fill="#fff"/><rect x="1.20" y="12.05" width="3.6" height="1.75" fill="#fff"/><rect x="6.15" y="12.05" width="3.6" height="1.75" fill="#fff"/><rect x="11.10" y="12.05" width="3.6" height="1.75" fill="#fff"/><path d="M0.2,3.9 H7.2 M3.7,0.4 V7.4" stroke="#8fc27a" stroke-width="3"/><path d="M1,3.9 H6.4 M3.7,1.2 V6.6" stroke="#e4f3d6" stroke-width="1.2"/></g></svg></div>
<div class="tb dis" style="left:669px;top:250px"><svg width="16" height="16" viewBox="0 0 16 16" overflow="visible"><g opacity="0.85"><rect x="0" y="1.9" width="15.9" height="13.5" fill="#b4cfea"/><rect x="0" y="10.75" width="15.9" height="3.05" fill="#8fc27a"/><rect x="1.20" y="3.20" width="3.6" height="1.75" fill="#fff"/><rect x="6.15" y="3.20" width="3.6" height="1.75" fill="#fff"/><rect x="11.10" y="3.20" width="3.6" height="1.75" fill="#fff"/><rect x="1.20" y="6.15" width="3.6" height="1.75" fill="#fff"/><rect x="6.15" y="6.15" width="3.6" height="1.75" fill="#fff"/><rect x="11.10" y="6.15" width="3.6" height="1.75" fill="#fff"/><rect x="1.20" y="9.10" width="3.6" height="1.75" fill="#fff"/><rect x="6.15" y="9.10" width="3.6" height="1.75" fill="#fff"/><rect x="11.10" y="9.10" width="3.6" height="1.75" fill="#fff"/><rect x="1.20" y="12.05" width="3.6" height="1.75" fill="#e4f3d6"/><rect x="6.15" y="12.05" width="3.6" height="1.75" fill="#e4f3d6"/><rect x="11.10" y="12.05" width="3.6" height="1.75" fill="#e4f3d6"/><path d="M0.2,3.9 H7.2 M3.7,0.4 V7.4" stroke="#8fc27a" stroke-width="3"/><path d="M1,3.9 H6.4 M3.7,1.2 V6.6" stroke="#e4f3d6" stroke-width="1.2"/></g></svg></div>
<div class="tb dis" style="left:695px;top:250px"><svg width="16" height="16" viewBox="0 0 16 16" overflow="visible"><g opacity="0.85"><rect x="0" y="1.9" width="15.9" height="13.5" fill="#b4cfea"/><rect x="0" y="7.80" width="15.9" height="3.05" fill="#e49a9a"/><rect x="1.20" y="3.20" width="3.6" height="1.75" fill="#fff"/><rect x="6.15" y="3.20" width="3.6" height="1.75" fill="#fff"/><rect x="11.10" y="3.20" width="3.6" height="1.75" fill="#fff"/><rect x="1.20" y="6.15" width="3.6" height="1.75" fill="#fff"/><rect x="6.15" y="6.15" width="3.6" height="1.75" fill="#fff"/><rect x="11.10" y="6.15" width="3.6" height="1.75" fill="#fff"/><rect x="1.20" y="9.10" width="3.6" height="1.75" fill="#f3d0d0"/><rect x="6.15" y="9.10" width="3.6" height="1.75" fill="#f3d0d0"/><rect x="11.10" y="9.10" width="3.6" height="1.75" fill="#f3d0d0"/><rect x="1.20" y="12.05" width="3.6" height="1.75" fill="#fff"/><rect x="6.15" y="12.05" width="3.6" height="1.75" fill="#fff"/><rect x="11.10" y="12.05" width="3.6" height="1.75" fill="#fff"/><path d="M11.2,0.6 L15.6,5 M15.6,0.6 L11.2,5" stroke="#ee8a8a" stroke-width="2"/></g></svg></div>
<div class="tb dis" style="left:721px;top:250px"><svg width="16" height="16" viewBox="0 0 16 16" overflow="visible"><g opacity="0.85"><rect x="0" y="1.9" width="15.9" height="13.5" fill="#b4cfea"/><rect x="0.00" y="1.9" width="5.15" height="13.5" fill="#8fc27a"/><rect x="1.20" y="3.20" width="3.6" height="1.75" fill="#e4f3d6"/><rect x="6.15" y="3.20" width="3.6" height="1.75" fill="#fff"/><rect x="11.10" y="3.20" width="3.6" height="1.75" fill="#fff"/><rect x="1.20" y="6.15" width="3.6" height="1.75" fill="#e4f3d6"/><rect x="6.15" y="6.15" width="3.6" height="1.75" fill="#fff"/><rect x="11.10" y="6.15" width="3.6" height="1.75" fill="#fff"/><rect x="1.20" y="9.10" width="3.6" height="1.75" fill="#e4f3d6"/><rect x="6.15" y="9.10" width="3.6" height="1.75" fill="#fff"/><rect x="11.10" y="9.10" width="3.6" height="1.75" fill="#fff"/><rect x="1.20" y="12.05" width="3.6" height="1.75" fill="#e4f3d6"/><rect x="6.15" y="12.05" width="3.6" height="1.75" fill="#fff"/><rect x="11.10" y="12.05" width="3.6" height="1.75" fill="#fff"/><path d="M0.2,3.9 H7.2 M3.7,0.4 V7.4" stroke="#8fc27a" stroke-width="3"/><path d="M1,3.9 H6.4 M3.7,1.2 V6.6" stroke="#e4f3d6" stroke-width="1.2"/></g></svg></div>
<div class="tb dis" style="left:747px;top:250px"><svg width="16" height="16" viewBox="0 0 16 16" overflow="visible"><g opacity="0.85"><rect x="0" y="1.9" width="15.9" height="13.5" fill="#b4cfea"/><rect x="9.90" y="1.9" width="5.15" height="13.5" fill="#8fc27a"/><rect x="1.20" y="3.20" width="3.6" height="1.75" fill="#fff"/><rect x="6.15" y="3.20" width="3.6" height="1.75" fill="#fff"/><rect x="11.10" y="3.20" width="3.6" height="1.75" fill="#e4f3d6"/><rect x="1.20" y="6.15" width="3.6" height="1.75" fill="#fff"/><rect x="6.15" y="6.15" width="3.6" height="1.75" fill="#fff"/><rect x="11.10" y="6.15" width="3.6" height="1.75" fill="#e4f3d6"/><rect x="1.20" y="9.10" width="3.6" height="1.75" fill="#fff"/><rect x="6.15" y="9.10" width="3.6" height="1.75" fill="#fff"/><rect x="11.10" y="9.10" width="3.6" height="1.75" fill="#e4f3d6"/><rect x="1.20" y="12.05" width="3.6" height="1.75" fill="#fff"/><rect x="6.15" y="12.05" width="3.6" height="1.75" fill="#fff"/><rect x="11.10" y="12.05" width="3.6" height="1.75" fill="#e4f3d6"/><path d="M0.2,3.9 H7.2 M3.7,0.4 V7.4" stroke="#8fc27a" stroke-width="3"/><path d="M1,3.9 H6.4 M3.7,1.2 V6.6" stroke="#e4f3d6" stroke-width="1.2"/></g></svg></div>
<div class="tb dis" style="left:773px;top:250px"><svg width="16" height="16" viewBox="0 0 16 16" overflow="visible"><g opacity="0.85"><rect x="0" y="1.9" width="15.9" height="13.5" fill="#b4cfea"/><rect x="4.95" y="1.9" width="5.15" height="13.5" fill="#e49a9a"/><rect x="1.20" y="3.20" width="3.6" height="1.75" fill="#fff"/><rect x="6.15" y="3.20" width="3.6" height="1.75" fill="#f3d0d0"/><rect x="11.10" y="3.20" width="3.6" height="1.75" fill="#fff"/><rect x="1.20" y="6.15" width="3.6" height="1.75" fill="#fff"/><rect x="6.15" y="6.15" width="3.6" height="1.75" fill="#f3d0d0"/><rect x="11.10" y="6.15" width="3.6" height="1.75" fill="#fff"/><rect x="1.20" y="9.10" width="3.6" height="1.75" fill="#fff"/><rect x="6.15" y="9.10" width="3.6" height="1.75" fill="#f3d0d0"/><rect x="11.10" y="9.10" width="3.6" height="1.75" fill="#fff"/><rect x="1.20" y="12.05" width="3.6" height="1.75" fill="#fff"/><rect x="6.15" y="12.05" width="3.6" height="1.75" fill="#f3d0d0"/><rect x="11.10" y="12.05" width="3.6" height="1.75" fill="#fff"/><path d="M11.2,0.6 L15.6,5 M15.6,0.6 L11.2,5" stroke="#ee8a8a" stroke-width="2"/></g></svg></div>
<div class="tb dis" style="left:799px;top:250px"><svg width="16" height="16" viewBox="0 0 16 16" overflow="visible"><g opacity="0.8"><rect x="0" y="1.9" width="15.9" height="13.5" fill="#b4cfea"/><rect x="1.20" y="3.20" width="3.6" height="1.75" fill="#fff"/><rect x="6.15" y="3.20" width="3.6" height="1.75" fill="#fff"/><rect x="11.10" y="3.20" width="3.6" height="1.75" fill="#fff"/><rect x="1.20" y="6.15" width="3.6" height="1.75" fill="#fff"/><rect x="6.15" y="6.15" width="3.6" height="1.75" fill="#fff"/><rect x="11.10" y="6.15" width="3.6" height="1.75" fill="#fff"/><rect x="1.20" y="9.10" width="3.6" height="1.75" fill="#fff"/><rect x="6.15" y="9.10" width="3.6" height="1.75" fill="#fff"/><rect x="11.10" y="9.10" width="3.6" height="1.75" fill="#fff"/><rect x="1.20" y="12.05" width="3.6" height="1.75" fill="#fff"/><rect x="6.15" y="12.05" width="3.6" height="1.75" fill="#fff"/><rect x="11.10" y="12.05" width="3.6" height="1.75" fill="#fff"/><rect x="6.2" y="9" width="3.6" height="1.75" fill="#9bb9d8"/></g></svg></div>
<div class="tb dis" style="left:825px;top:250px"><svg width="16" height="16" viewBox="0 0 16 16" overflow="visible"><g opacity="0.8"><rect x="0" y="1.9" width="15.9" height="13.5" fill="#b4cfea"/><rect x="1.20" y="3.20" width="3.6" height="1.75" fill="#fff"/><rect x="6.15" y="3.20" width="3.6" height="1.75" fill="#fff"/><rect x="11.10" y="3.20" width="3.6" height="1.75" fill="#fff"/><rect x="1.20" y="6.15" width="3.6" height="1.75" fill="#fff"/><rect x="6.15" y="6.15" width="3.6" height="1.75" fill="#fff"/><rect x="11.10" y="6.15" width="3.6" height="1.75" fill="#fff"/><rect x="1.20" y="9.10" width="3.6" height="1.75" fill="#fff"/><rect x="6.15" y="9.10" width="3.6" height="1.75" fill="#fff"/><rect x="11.10" y="9.10" width="3.6" height="1.75" fill="#fff"/><rect x="1.20" y="12.05" width="3.6" height="1.75" fill="#fff"/><rect x="6.15" y="12.05" width="3.6" height="1.75" fill="#fff"/><rect x="11.10" y="12.05" width="3.6" height="1.75" fill="#fff"/><rect x="5.6" y="5.6" width="10" height="3" fill="#f3dc8a" stroke="#e4c56a" stroke-width="0.6"/></g></svg></div>
<div class="tb dis" style="left:851px;top:250px"><svg width="16" height="16" viewBox="0 0 16 16" overflow="visible"><g opacity="0.8"><rect x="0" y="1.9" width="15.9" height="13.5" fill="#b4cfea"/><rect x="1.20" y="3.20" width="3.6" height="1.75" fill="#fff"/><rect x="6.15" y="3.20" width="3.6" height="1.75" fill="#fff"/><rect x="11.10" y="3.20" width="3.6" height="1.75" fill="#fff"/><rect x="1.20" y="6.15" width="3.6" height="1.75" fill="#fff"/><rect x="6.15" y="6.15" width="3.6" height="1.75" fill="#fff"/><rect x="11.10" y="6.15" width="3.6" height="1.75" fill="#fff"/><rect x="1.20" y="9.10" width="3.6" height="1.75" fill="#fff"/><rect x="6.15" y="9.10" width="3.6" height="1.75" fill="#fff"/><rect x="11.10" y="9.10" width="3.6" height="1.75" fill="#fff"/><rect x="1.20" y="12.05" width="3.6" height="1.75" fill="#fff"/><rect x="6.15" y="12.05" width="3.6" height="1.75" fill="#fff"/><rect x="11.10" y="12.05" width="3.6" height="1.75" fill="#fff"/><rect x="5.6" y="5.6" width="10" height="3" fill="#eaa8a8" stroke="#d98080" stroke-width="0.6"/></g></svg></div>
<div class="tsep" style="left:879px;top:255px"></div>
<div class="combo" style="left:884px;top:250px"><span>Format</span><div class="carr"><svg width="7" height="4" viewBox="0 0 7 4"><path d="M0,0 H7 L3.5,4 Z" fill="#333"/></svg></div></div>
<div class="combo" style="left:1008px;top:250px"><span>Font size</span><div class="carr"><svg width="7" height="4" viewBox="0 0 7 4"><path d="M0,0 H7 L3.5,4 Z" fill="#333"/></svg></div></div>
<div class="combo" style="left:1132px;top:250px"><span>Font</span><div class="carr"><svg width="7" height="4" viewBox="0 0 7 4"><path d="M0,0 H7 L3.5,4 Z" fill="#333"/></svg></div></div>
<div class="a" id="edarea">
  <div class="a" id="ediv">Type your content in here!</div>
</div>
<div class="a" id="pathbar">div</div>
<div class="a etab" style="left:551px;width:69px;background:#ececec;border-color:#ececec">Editor</div>
<div class="a etab" style="left:622px;width:71px;background:#fff;color:#666">Source</div>
<!--/ED-->
<div id="save" class="a">Save</div>
</body></html>
